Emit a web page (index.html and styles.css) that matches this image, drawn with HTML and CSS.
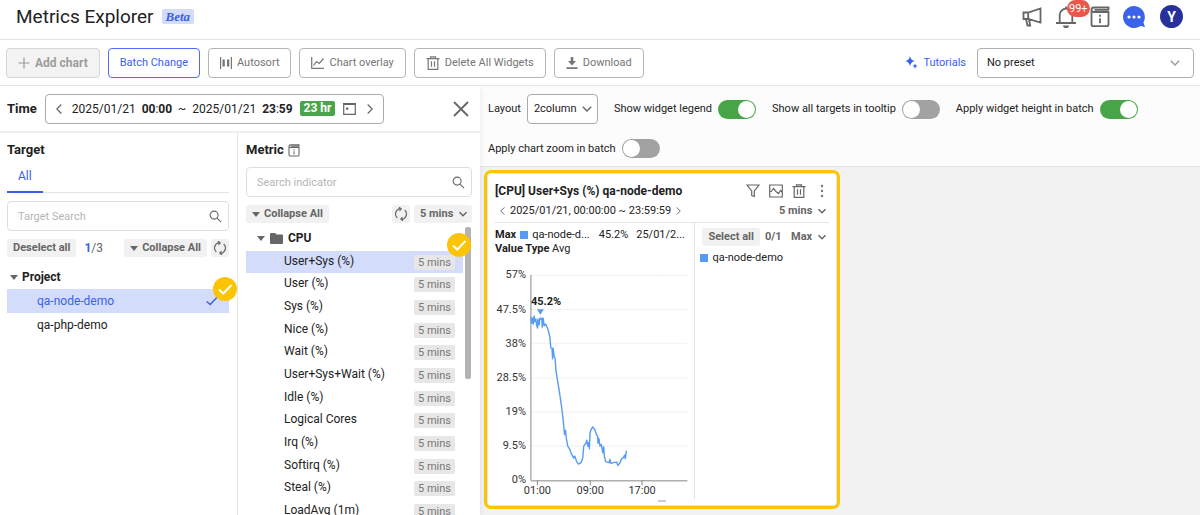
FILE: index.html
```html
<!DOCTYPE html>
<html lang="en">
<head>
<meta charset="utf-8">
<title>Metrics Explorer</title>
<link rel="stylesheet" href="styles.css">
</head>
<body>
<svg class="defs" aria-hidden="true">
  <symbol id="book" viewBox="0 0 20 22"><path d="M1.500 3.500v14.700q0 2 2 2h13q2 0 2-2V6H4Q1.500 6 1.500 3.800T4 1.500h14.500v2.700M4.500 3.800h14"/><path d="M10 8.800v2M10 12.200v5"/></symbol>
  <symbol id="search" viewBox="0 0 14 14"><circle cx="5.500" cy="5.500" r="4.300"/><path d="M8.700 8.700l4.300 4.300"/></symbol>
  <symbol id="refresh" viewBox="0 0 14 14"><path d="M6 1.700A5.400 5.400 0 0 0 3.300 11M8 12.300A5.400 5.400 0 0 0 10.700 3M5 .2l2.200 1.600L5.500 3.900M9 13.800l-2.200-1.600 1.700-2.100"/></symbol>
  <symbol id="chev" viewBox="0 0 10 10"><path d="M1.500 3.200L5 6.700l3.500-3.500"/></symbol>
  <symbol id="trash" viewBox="0 0 14 14"><path d="M.5 2.700h13M4.500 2.500V.8h5v1.700M2.200 2.700v10.600h9.600V2.700M5.500 5.200v5.600M8.500 5.200v5.600"/></symbol>
  <symbol id="tri" viewBox="0 0 8 5"><path d="M0 0h8L4 5z"/></symbol>
  <symbol id="check" viewBox="0 0 24 24"><circle cx="12" cy="12" r="12"/><path d="M6 12.500l4.200 4L18.500 8"/></symbol>
</svg>

<header class="topbar">
  <h1 class="page-title">Metrics Explorer</h1>
  <span class="beta">Beta</span>
  <nav class="top-icons">
    <button class="icon-btn" aria-label="Announcements"><svg class="line" width="20" height="20" viewBox="0 0 20 20"><path d="M1.500 5.500h4.700L18.500 1.500v14L6.200 12H1.500zM6.200 5.500V12M4 12l1.500 6.500h2.700L7 12.500"/></svg></button>
    <button class="icon-btn bell" aria-label="Notifications"><svg class="line" width="20" height="22" viewBox="0 0 20 22"><path d="M0 17h20M3.700 17V9a6.300 6.300 0 0 1 12.600 0v8M10 2.500V.5"/><path class="solid" d="M7 19.500h6a3 2.600 0 0 1-6 0z"/></svg><span class="count">99+</span></button>
    <button class="icon-btn" aria-label="Guide"><svg class="line" width="20" height="22"><use href="#book"/></svg></button>
    <button class="icon-btn chat" aria-label="Chat"><svg width="24" height="24" viewBox="0 0 24 24"><path class="blue-fill" d="M12 1a11 11 0 1 0 6.500 19.900L23 22l-1.600-4.500A11 11 0 0 0 12 1z"/><g class="white-fill"><circle cx="7" cy="12" r="1.600"/><circle cx="12" cy="12" r="1.600"/><circle cx="17" cy="12" r="1.600"/></g></svg></button>
    <button class="avatar">Y</button>
  </nav>
</header>

<div class="toolbar">
  <button class="btn btn-disabled" disabled><svg class="line" width="12" height="12" viewBox="0 0 12 12"><path d="M6 .5v11M.5 6h11"/></svg>Add chart</button>
  <button class="btn btn-primary">Batch Change</button>
  <button class="btn"><svg width="12" height="12" viewBox="0 0 12 12"><path class="gray-fill" d="M0 0h1.200v12H0zM10.800 0H12v12h-1.200zM2.500 2.500h2.300v7H2.500zM7 2.500h2.300v7H7z"/></svg>Autosort</button>
  <button class="btn"><svg class="line" width="13" height="12" viewBox="0 0 13 12"><path d="M.7 0v11.300H13M2.500 8.500l3-4 2.700 2L12.500 1.500"/></svg>Chart overlay</button>
  <button class="btn"><svg class="line" width="14" height="14"><use href="#trash"/></svg>Delete All Widgets</button>
  <button class="btn"><svg width="12" height="12" viewBox="0 0 12 12"><path class="gray-fill" d="M4.700 0h2.600v4H10L6 8.500 2 4h2.700zM.5 10.300h11V12H.5z"/></svg>Download</button>
  <a class="tutorials" href="#"><svg width="13" height="13" viewBox="0 0 13 13"><path class="blue-fill" d="M5 0q.7 4.300 5 5-4.300.7-5 5.500Q4.300 5.700 0 5 4.300 4.300 5 0zM10 7.500q.4 2.100 2.500 2.500-2.100.4-2.500 2.700Q9.600 10.400 7.500 10 9.600 9.600 10 7.500z"/></svg>Tutorials</a>
  <label class="select preset"><select aria-label="Preset"><option>No preset</option></select><svg class="line" width="12" height="12"><use href="#chev"/></svg></label>
</div>

<main class="workspace">
  <aside class="side">
    <div class="time-row">
      <h2 class="label">Time</h2>
      <div class="time-box">
        <button class="icon-btn" aria-label="Previous"><svg class="line" width="6" height="10" viewBox="0 0 6 10"><path d="M5.300.5L.8 5l4.500 4.500"/></svg></button>
        <span>2025/01/21</span><b>00<i>:</i>00</b><span>~</span><span>2025/01/21</span><b>23<i>:</i>59</b>
        <span class="range">23 hr</span>
        <button class="icon-btn" aria-label="Calendar"><svg class="line" width="13" height="13" viewBox="0 0 13 13"><path d="M.7 1.500h11.600v10.800H.7z"/><path class="solid" d="M0 1h13v2H0zM3 5.500h2.300v2.300H3z"/></svg></button>
        <button class="icon-btn" aria-label="Next"><svg class="line" width="6" height="10" viewBox="0 0 6 10"><path d="M.7.5L5.200 5 .7 9.500"/></svg></button>
      </div>
      <button class="icon-btn close" aria-label="Close"><svg class="line" width="16" height="16" viewBox="0 0 16 16"><path d="M1 1l14 14M15 1L1 15"/></svg></button>
    </div>
    <div class="panels">
      <section class="target">
        <h2 class="label">Target</h2>
        <div class="tabs"><button class="tab">All</button></div>
        <div class="search"><input type="text" placeholder="Target Search" aria-label="Target Search"><svg class="line" width="13" height="13"><use href="#search"/></svg></div>
        <div class="tools">
          <button class="chip">Deselect all</button>
          <span class="ratio"><b>1</b>/3</span>
          <button class="chip push"><svg width="8" height="5"><use href="#tri"/></svg>Collapse All</button>
          <button class="chip square" aria-label="Refresh"><svg class="line" width="14" height="14"><use href="#refresh"/></svg></button>
        </div>
        <div class="group"><svg width="8" height="5"><use href="#tri"/></svg>Project</div>
        <ul class="projects">
          <li class="active">qa-node-demo<svg class="tick" width="12" height="10" viewBox="0 0 12 10"><path d="M.7 5.500l3.500 3L11.300 1"/></svg><svg class="mark" width="24" height="24"><use href="#check"/></svg></li>
          <li>qa-php-demo</li>
        </ul>
      </section>
      <section class="metric">
        <h2 class="label">Metric <svg class="line thick" width="12" height="13"><use href="#book"/></svg></h2>
        <div class="search"><input type="text" placeholder="Search indicator" aria-label="Search indicator"><svg class="line" width="13" height="13"><use href="#search"/></svg></div>
        <div class="tools">
          <button class="chip"><svg width="8" height="5"><use href="#tri"/></svg>Collapse All</button>
          <button class="chip square push" aria-label="Refresh"><svg class="line" width="14" height="14"><use href="#refresh"/></svg></button>
          <label class="select chip-select"><select aria-label="Interval"><option>5 mins</option></select><svg class="line" width="10" height="10"><use href="#chev"/></svg></label>
        </div>
        <div class="scroll">
          <div class="tree">
            <div class="group"><svg width="8" height="5"><use href="#tri"/></svg><svg width="13" height="11" viewBox="0 0 13 11"><path d="M1 0h4l1.500 1.500H12q1 0 1 1V10q0 1-1 1H1q-1 0-1-1V1q0-1 1-1z"/></svg>CPU</div>
            <ul class="metrics">
              <li class="active">User+Sys (%)<span class="tag">5 mins</span><svg class="mark" width="24" height="24"><use href="#check"/></svg></li>
              <li>User (%)<span class="tag">5 mins</span></li>
              <li>Sys (%)<span class="tag">5 mins</span></li>
              <li>Nice (%)<span class="tag">5 mins</span></li>
              <li>Wait (%)<span class="tag">5 mins</span></li>
              <li>User+Sys+Wait (%)<span class="tag">5 mins</span></li>
              <li>Idle (%)<span class="tag">5 mins</span></li>
              <li>Logical Cores<span class="tag">5 mins</span></li>
              <li>Irq (%)<span class="tag">5 mins</span></li>
              <li>Softirq (%)<span class="tag">5 mins</span></li>
              <li>Steal (%)<span class="tag">5 mins</span></li>
              <li>LoadAvg (1m)<span class="tag">5 mins</span></li>
            </ul>
          </div>
          <div class="thumb"></div>
        </div>
      </section>
    </div>
  </aside>

  <section class="board">
    <div class="settings">
      <label class="setting">Layout<span class="select layout"><select><option>2column</option></select><svg class="line" width="12" height="12"><use href="#chev"/></svg></span></label>
      <label class="setting">Show widget legend<input class="switch" type="checkbox" checked></label>
      <label class="setting">Show all targets in tooltip<input class="switch" type="checkbox"></label>
      <label class="setting">Apply widget height in batch<input class="switch" type="checkbox" checked></label>
      <label class="setting">Apply chart zoom in batch<input class="switch" type="checkbox"></label>
    </div>
    <div class="grid">
      <article class="widget">
        <div class="widget-in">
          <header class="widget-head">
            <h3>[CPU] User+Sys (%) qa-node-demo</h3>
            <div class="actions">
              <button class="icon-btn" aria-label="Filter"><svg class="line" width="14" height="14" viewBox="0 0 14 14"><path d="M1 1h12L8.300 7v5.500l-2.600-1V7z"/></svg></button>
              <button class="icon-btn" aria-label="Chart"><svg class="line" width="14" height="14" viewBox="0 0 14 14"><path d="M.7 1h12.600v12H.7zM1 7.500h1.200L4.500 4.500 7 7.500l2.500 2 2-3L13 8"/></svg></button>
              <button class="icon-btn" aria-label="Delete"><svg class="line" width="14" height="14"><use href="#trash"/></svg></button>
              <button class="icon-btn" aria-label="More"><svg width="14" height="14" viewBox="0 0 14 14"><g class="gray-fill"><circle cx="7" cy="2" r="1.200"/><circle cx="7" cy="7" r="1.200"/><circle cx="7" cy="12" r="1.200"/></g></svg></button>
            </div>
          </header>
          <div class="widget-time">
            <svg class="line" width="5" height="8" viewBox="0 0 6 10"><path d="M5.300.5L.8 5l4.500 4.500"/></svg>
            <span>2025/01/21, 00:00:00 ~ 23:59:59</span>
            <svg class="line" width="5" height="8" viewBox="0 0 6 10"><path d="M.7.5L5.200 5 .7 9.500"/></svg>
            <label class="select plain push"><select aria-label="Widget interval"><option>5 mins</option></select><svg class="line" width="10" height="10"><use href="#chev"/></svg></label>
          </div>
          <div class="widget-body">
            <div class="chart">
              <div class="stats"><b>Max</b><i class="swatch"></i><span>qa-node-d...</span><span class="peak-value">45.2%</span><span>25/01/2...</span></div>
              <div class="value-type"><b>Value Type</b> Avg</div>
              <svg class="plot" viewBox="0 0 200 238">
                <path class="gridline" d="M36 13.500h157M36 47.500h157M36 81.500h157M36 116.500h157M36 150.500h157M36 184.500h157"/>
                <path class="axis" d="M36 13v206M36 219.500h157M42.500 219v5M95.500 219v5M147.500 219v5"/>
                <g class="ylabels"><text x="31" y="16">57%</text><text x="31" y="51">47.5%</text><text x="31" y="85">38%</text><text x="31" y="119">28.5%</text><text x="31" y="153">19%</text><text x="31" y="188">9.5%</text><text x="31" y="222">0%</text></g>
                <g class="xlabels"><text x="42.500" y="233">01:00</text><text x="95.500" y="233">09:00</text><text x="147.500" y="233">17:00</text></g>
                <path class="series" d="M36 55L36.700 61.300 37.700 56.300 38.300 62.300 39.300 54 40 59.700 41 57.300 41.700 63 42.700 66.300 43 57.300 44.300 63 45 56.300 46.300 57.300 47 56.300 47.300 65.300 48.300 56.300 49.300 64 50.700 62.300 52.300 65.300 54 70.700 55 75.300 56 86.300 57.300 87.300 57.700 97 58.300 86.300 59.300 94.700 60.300 96.300 61 108 62.300 116.300 63.700 124.700 65 133 66.700 144.700 68.300 157.300 69.700 173 70.700 168.700 71.700 178 73 184.700 75 188 77 193 79 196.700 80 194.700 81.700 199.700 83.700 202.700 86.300 201.300 88 196.300 89 184.700 91 182 92 178.700 93 184.700 93.700 181.300 94.700 187.300 95.300 171.300 96.700 167.300 98 165.300 100 168 101.700 173 103 174.700 103.300 182 104.300 177.300 105.300 184.700 106.700 183 108 191.300 109 185.300 109.700 194.700 111 200.300 114.300 201.300 115.300 198 116.300 202 120 201 122.300 200.700 123 204 125 202 127 197.300 128.700 196.300 130 193.700 130.700 197.300 131.700 189.700 132.300 189.700"/>
                <path class="series-fill" d="M42 47.500h7l-3.500 5.500z"/>
                <text class="peak" x="36" y="43">45.2%</text>
              </svg>
            </div>
            <div class="legend">
              <div class="legend-tools"><button class="chip">Select all</button><span>0/1</span><label class="select plain push"><select aria-label="Aggregate"><option>Max</option></select><svg class="line" width="10" height="10"><use href="#chev"/></svg></label></div>
              <div class="legend-item"><i class="swatch"></i>qa-node-demo</div>
            </div>
          </div>
          <div class="handle"></div>
        </div>
      </article>
    </div>
  </section>
</main>
</body>
</html>
```

FILE: styles.css
```css
* { box-sizing: border-box; }
body { margin: 0; height: 100vh; display: flex; flex-direction: column; overflow: hidden; background: #fff; color: #222; font: 12px/16px Roboto, "Noto Sans", sans-serif; }
h1, h2, h3, ul { margin: 0; padding: 0; list-style: none; }
button, input, select { font: inherit; color: inherit; margin: 0; }
button { cursor: pointer; }
b { font-weight: 700; }
svg { display: block; flex: none; }
.defs { width: 0; height: 0; position: absolute; }
.line { fill: none; stroke: #666; stroke-width: 1.2; }
.solid { fill: #666; stroke: none; }
.blue-fill { fill: #3a62ea; }
.white-fill { fill: #fff; }
.gray-fill { fill: #777; }
.push { margin-left: auto; }
.icon-btn { display: flex; padding: 0; border: 0; background: none; }

.topbar { display: flex; align-items: center; flex: none; height: 40px; padding: 0 17px 6px 16px; border-bottom: 1px solid #e4e4e4; }
.page-title { font-size: 19px; line-height: 24px; font-weight: 400; }
.beta { margin-left: 8px; padding: 0 4px; border-radius: 2px; background: #d3dcfb; color: #3a5fe5; font: italic bold 13px/15px "Liberation Serif", serif; }
.top-icons { display: flex; align-items: center; gap: 14px; margin-left: auto; }
.top-icons .line { stroke-width: 1.8; }
.bell { position: relative; }
.chat { margin-left: -2px; }
.count { position: absolute; left: 11px; top: -6px; padding: 0 2px; border-radius: 9px; background: #ea5648; color: #fff; font-size: 11px; line-height: 17px; }
.avatar { width: 23px; height: 23px; padding: 0; border: 0; border-radius: 50%; background: #28319b; color: #fff; font-size: 14px; font-weight: 700; }

.toolbar { display: flex; align-items: center; gap: 8px; flex: none; height: 46px; padding: 0 6px; border-bottom: 1px solid #e4e4e4; font-size: 11px; }
.btn { display: flex; align-items: center; gap: 5px; height: 30px; padding: 0 11px; border: 1px solid #b5b5b5; border-radius: 4px; background: #fff; color: #757575; white-space: nowrap; }
.btn .line { stroke: #777; }
.btn-disabled { border-color: #d6d6d6; background: #f3f3f3; color: #9c9c9c; font-size: 12px; font-weight: 700; }
.btn-disabled .line { stroke: #999; }
.btn-primary { border-color: #4a6ff0; color: #3a62ea; }
.tutorials { display: flex; align-items: center; gap: 5px; margin-left: auto; margin-right: 3px; color: #3a62ea; text-decoration: none; }

.select { display: inline-grid; align-items: center; }
.select select { grid-area: 1 / 1; width: 100%; height: 100%; border: 0; background: none; appearance: none; }
.select svg { grid-area: 1 / 1; justify-self: end; pointer-events: none; }
.preset { width: 217px; height: 30px; }
.preset select { padding: 0 9px; border: 1px solid #b0b0b0; border-radius: 4px; }
.preset svg { margin-right: 13px; stroke: #999; }

.workspace { display: flex; flex: 1; min-height: 0; }
.side { display: flex; flex-direction: column; flex: none; width: 480px; z-index: 1; background: #fff; box-shadow: 1px 2px 6px #0001; }
.time-row { display: flex; align-items: center; gap: 8px; flex: none; height: 47px; padding: 0 11px 0 7px; border-bottom: 2px solid #efefef; }
.label { display: flex; align-items: center; gap: 4px; font-size: 13px; line-height: 16px; font-weight: 700; }
.time-box { display: flex; align-items: center; gap: 6px; height: 30px; padding: 0 10px; border: 1px solid #aaa; border-radius: 4px; white-space: nowrap; }
.time-box .icon-btn:first-child { margin-right: 4px; }
.time-box .icon-btn:last-child { margin-left: 5px; }
.time-box i { font-style: normal; font-weight: 400; }
.range { margin: 0 2px 0 1px; padding: 0 4px; border-radius: 2px; background: #4aa54a; color: #fff; font-weight: 700; line-height: 15px; }
.close { margin-left: auto; }
.close .line { stroke-width: 1.8; }

.panels { display: flex; flex: 1; min-height: 0; }
.target { width: 238px; padding: 9px 8px 0 7px; border-right: 1px solid #e6e6e6; }
.tabs { margin-top: 6px; border-bottom: 1px solid #e4e4e4; }
.tab { height: 29px; padding: 0 11px 4px; margin-bottom: -1px; border: 0; border-bottom: 2px solid #3a62ea; background: none; color: #3a62ea; }
.search { display: grid; align-items: center; height: 30px; margin-top: 8px; }
.search input { grid-area: 1 / 1; width: 100%; height: 100%; padding: 0 10px; border: 1px solid #dedede; border-radius: 4px; background: #fff; font-size: 11px; }
.search input::placeholder { color: #b5b5b5; opacity: 1; }
.search svg { grid-area: 1 / 1; justify-self: end; margin-right: 7px; }
.tools { display: flex; align-items: center; gap: 4px; height: 18px; margin-top: 8px; }
.chip { display: flex; align-items: center; gap: 4px; height: 18px; padding: 0 6px; border: 0; border-radius: 3px; background: #f1f1f1; color: #666; font-size: 11px; font-weight: 700; white-space: nowrap; }
.chip svg { fill: #666; }
.chip .line { fill: none; }
.square { width: 18px; padding: 0; justify-content: center; }
.ratio { margin-left: 4px; color: #666; }
.ratio b { color: #3a62ea; }
.group { display: flex; align-items: center; gap: 4px; font-weight: 700; }
.group svg { fill: #666; }
.target .group { margin-top: 12px; padding-left: 3px; }
.projects { margin-top: 4px; }
.projects li { display: flex; align-items: center; height: 24px; padding: 0 11px 0 30px; }
.projects .active { position: relative; background: #d3dcfb; color: #3a62ea; }
.tick { margin-left: auto; fill: none; stroke: #3a62ea; stroke-width: 1.5; }
.mark { position: absolute; right: -8px; top: -12px; fill: #fdc404; stroke: #fff; stroke-width: 2; }
#check circle { stroke: none; }
#check path { fill: none; }

.metric { display: flex; flex-direction: column; flex: 1; min-width: 0; padding: 9px 8px 0; }
.metric .search { margin-top: 9px; flex: none; }
.thick { stroke-width: 1.8; }
.metric .tools { flex: none; }
.chip-select { height: 18px; border-radius: 3px; background: #f1f1f1; color: #666; font-size: 11px; font-weight: 700; }
.chip-select select { padding: 0 18px 0 6px; }
.chip-select svg { margin-right: 4px; stroke-width: 1.5; }
.scroll { display: flex; gap: 2px; flex: 1; min-height: 0; margin-top: 4px; padding-right: 1px; }
.tree { flex: 1; }
.tree .group { height: 24px; padding: 0 0 2px 11px; gap: 5px; }
.metrics li { display: flex; justify-content: space-between; height: 23px; padding: 0 8px 0 38px; line-height: 21px; }
.metrics li:nth-child(3n+1) { height: 22px; }
.metrics .active { position: relative; background: #d3dcfb; }
.metrics .mark { top: -18px; }
.tag { align-self: center; padding: 0 4px; border-radius: 2px; background: #e7e7e7; color: #777; font-size: 11px; line-height: 15px; }
.thumb { width: 6px; height: 152px; border-radius: 2px; background: #b3b3b3; }

.board { flex: 1; min-width: 0; background: #f2f2f2; }
.settings { display: flex; flex-wrap: wrap; align-items: center; gap: 15px 16px; padding: 8px; border-bottom: 1px solid #e4e4e4; background: #fcfcfc; font-size: 11px; }
.setting { display: flex; align-items: center; gap: 6px; white-space: nowrap; }
.layout { height: 30px; border: 1px solid #aaa; border-radius: 4px; background: #fff; }
.layout select { padding: 0 20px 0 6px; }
.layout svg { margin-right: 4px; }
.switch { width: 38px; height: 19px; margin: 0; padding: 1px; border-radius: 10px; appearance: none; background: #a2a2a2; }
.switch::before { content: ""; display: block; width: 17px; height: 17px; border-radius: 50%; background: #fff; }
.switch:checked { background: #47a447; }
.switch:checked::before { margin-left: auto; }

.grid { display: grid; grid-template-columns: repeat(2, minmax(0, 1fr)); padding: 3px 4px; }
.widget { border: 3px solid #fdc404; border-radius: 7px; background: #e6e6e6; padding: 1px; }
.widget-in { padding: 7px 7px 3px; border-radius: 3px; background: #fff; }
.widget-head { display: flex; align-items: center; justify-content: space-between; height: 20px; }
.widget-head h3 { font-size: 12px; font-weight: 700; white-space: nowrap; }
.actions { display: flex; gap: 9px; }
.widget-time { display: flex; align-items: center; gap: 5px; height: 22px; padding: 0 2px 2px 5px; font-size: 11px; border-bottom: 1px solid #e4e4e4; white-space: nowrap; }
.plain { color: #666; font-weight: 700; font-size: 11px; }
.plain select { padding: 0 14px 0 0; }
.plain svg { stroke-width: 1.5; }
.widget-body { display: flex; }
.chart { flex: 1; min-width: 0; padding-top: 4px; border-right: 1px solid #e4e4e4; }
.stats { display: flex; align-items: center; gap: 4px; font-size: 11px; line-height: 15px; white-space: nowrap; }
.swatch { flex: none; width: 8px; height: 8px; background: #559bf7; }
.peak-value { margin: 0 4px 0 5px; }
.value-type { font-size: 11px; line-height: 13px; }
.plot { width: 100%; margin-top: 7px; }
.plot text { fill: #333; font-size: 11px; }
.ylabels { text-anchor: end; }
.xlabels { text-anchor: middle; }
.plot .peak { fill: #222; font-weight: 700; }
.gridline { stroke: #ececec; stroke-dasharray: 3 1; }
.axis { fill: none; stroke: #888; }
.series { fill: none; stroke: #559bf7; stroke-width: 1.4; stroke-linejoin: round; }
.series-fill { fill: #559bf7; }
.legend { flex: 0 0 40%; min-width: 0; padding: 5px 2px 0 5px; font-size: 11px; }
.legend-tools { display: flex; align-items: center; gap: 5px; color: #666; font-weight: 700; }
.legend-tools .chip { margin-left: 2px; }
.legend-item { display: flex; align-items: center; gap: 4px; margin-top: 4px; }
.handle { width: 8px; height: 2px; margin: 1px auto 0; background: #ccc; }
```
